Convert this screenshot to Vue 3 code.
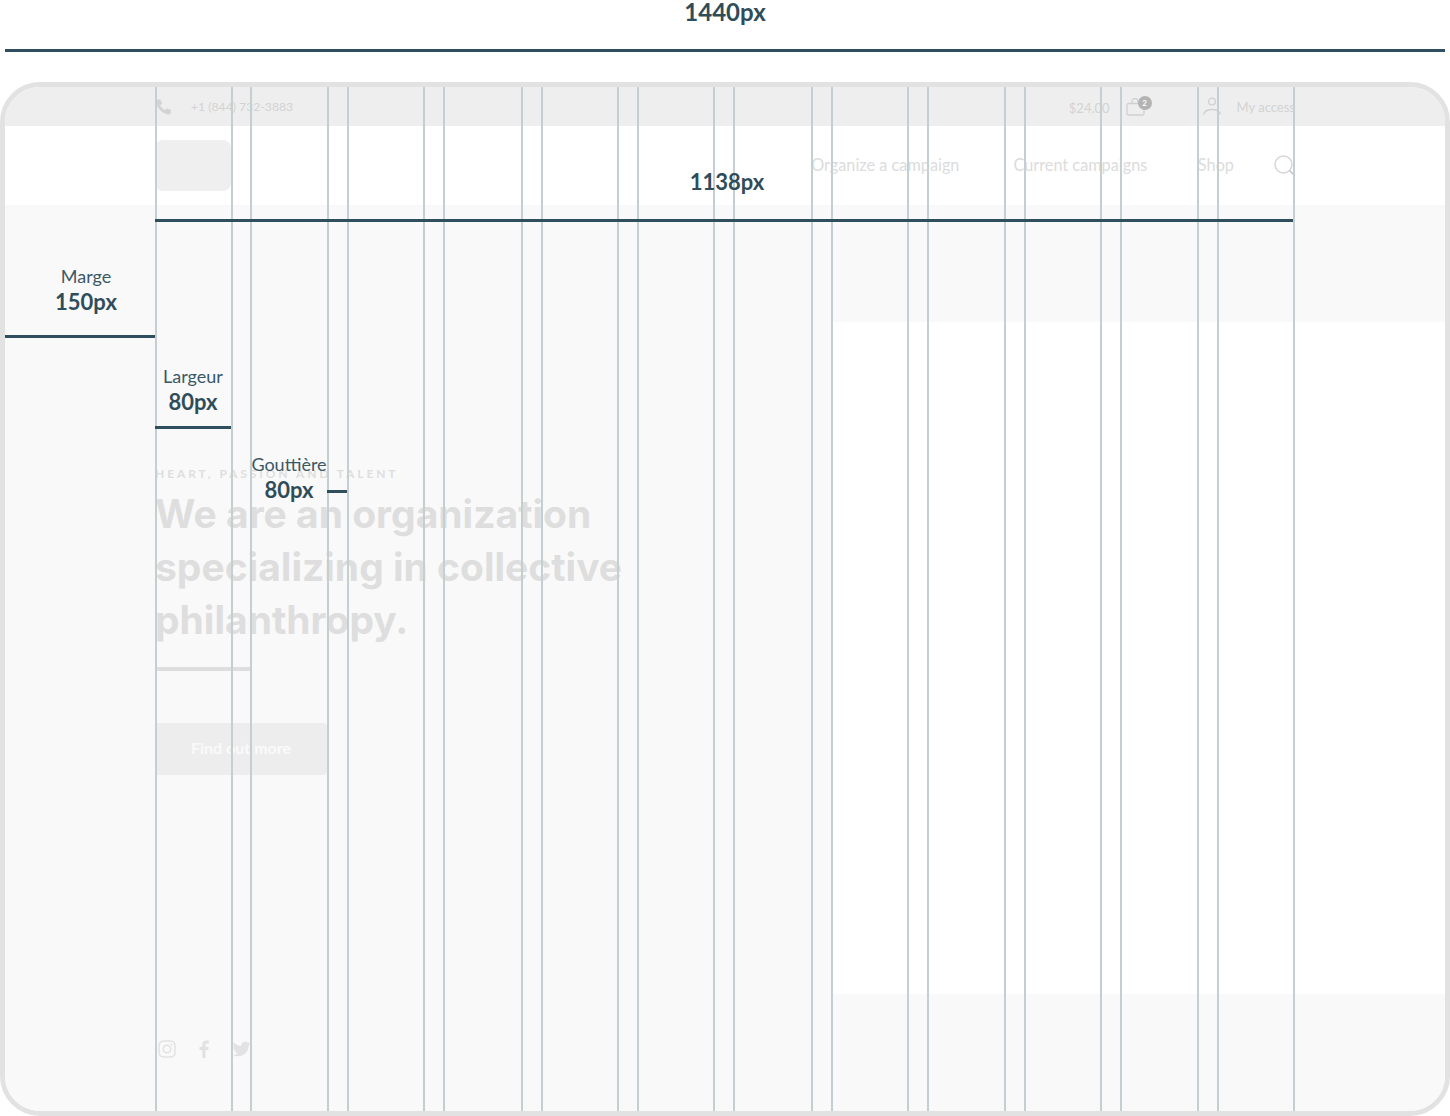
<script setup>
const gridLines = [155, 231, 250, 327, 347, 423, 443, 521, 541, 617, 637, 713, 733, 811, 831, 907, 927, 1004, 1024, 1100, 1120, 1197, 1217, 1293]
</script>

<template>
  <div class="page">
    <header class="total">
      <div class="total-label">1440px</div>
      <div class="total-rule"></div>
    </header>

    <div class="frame">
      <div class="topbar">
        <div class="top-left">
          <svg class="phone" width="20" height="20" viewBox="0 0 18 18">
            <path d="M1.500 1.200 4.200.6c.4-.1.7.1.8.4l1.200 3c.1.3 0 .6-.2.8L4.600 6c.9 1.900 2.400 3.400 4.300 4.300l1.200-1.300c.2-.2.500-.3.800-.2l3 1.200c.4.100.600.500.500.800l-.6 2.800c-.1.400-.4.600-.7.600C7.100 14.200.9 8.600.9 1.900c0-.3.200-.6.600-.7Z" fill="#d3d3d3" transform="translate(0 1.500)" />
          </svg>
          <span class="phone-no">+1 (844) 732-3883</span>
        </div>
        <div class="top-right">
          <span class="amount">$24.00</span>
          <span class="bag">
            <svg width="20" height="18" viewBox="0 0 20 18" fill="none" stroke="#d0d0d0" stroke-width="1.300">
              <rect x="1" y="5.500" width="17" height="11.500" rx="1.500" />
              <path d="M6 5.500V3.500a3 3 0 0 1 6 0v2" />
            </svg>
            <span class="badge">2</span>
          </span>
          <svg class="user" width="20" height="20" viewBox="0 1 20 20" fill="none" stroke="#d0d0d0" stroke-width="1.300">
            <circle cx="10" cy="5.500" r="3.400" />
            <path d="M1.500 18.500c1-3.500 4.500-5 8.500-5s7.500 1.500 8.500 5" />
          </svg>
          <span class="access">My access</span>
        </div>
      </div>

      <nav class="nav">
        <div class="logo"></div>
        <div class="menu">
          <a class="item">Organize a campaign</a>
          <a class="item">Current campaigns</a>
          <a class="item">Shop</a>
          <svg class="search" width="21" height="21" viewBox="0 0 21 21" fill="none" stroke="#d6d6d6" stroke-width="1.500">
            <circle cx="9.500" cy="9.500" r="8.500" />
            <path d="m15.700 15.700 4.300 4.300" stroke="#c2c2c2" />
          </svg>
        </div>
      </nav>

      <section class="hero">
        <div class="hero-left">
          <div class="eyebrow">HEART, PASSION AND TALENT</div>
          <h1 class="title">We are an organization specializing in collective philanthropy.</h1>
          <div class="divider"></div>
          <button class="cta">Find out more</button>
          <div class="socials">
            <svg width="18" height="18" viewBox="0 0 18 18" fill="none" stroke="#e2e2e2" stroke-width="1.500">
              <rect x="1" y="1" width="16" height="16" rx="4.500" />
              <circle cx="9" cy="9" r="3.800" />
              <circle cx="13.600" cy="4.400" r=".9" fill="#e2e2e2" stroke="none" />
            </svg>
            <svg width="10" height="18" viewBox="0 0 10 18">
              <path d="M6.500 18V10h2.700l.4-3.200H6.500V4.900c0-.9.300-1.500 1.600-1.500h1.700V.6C9.500.5 8.500.4 7.400.4 5 .4 3.300 1.900 3.300 4.500v2.300H.5V10h2.800v8Z" fill="#e2e2e2" />
            </svg>
            <svg width="19" height="18" viewBox="0 0 24 24">
              <path d="M23.950 4.570a10 10 0 0 1-2.820.770 4.960 4.960 0 0 0 2.160-2.720c-.95.550-2 .96-3.130 1.190a4.920 4.920 0 0 0-8.380 4.480C7.690 8.100 4.070 6.130 1.640 3.160a4.820 4.820 0 0 0-.67 2.480c0 1.710.87 3.210 2.190 4.100a4.900 4.900 0 0 1-2.230-.62v.06a4.920 4.920 0 0 0 3.950 4.830 5 5 0 0 1-2.210.08 4.940 4.940 0 0 0 4.610 3.420A9.870 9.870 0 0 1 0 19.540a14 14 0 0 0 7.560 2.210c9.050 0 14-7.500 14-13.980 0-.21 0-.42-.02-.63a9.940 9.940 0 0 0 2.410-2.570Z" fill="#e2e2e2" />
            </svg>
          </div>
        </div>
        <div class="hero-right">
          <div class="panel"></div>
        </div>
      </section>

      <div class="grid-overlay">
        <span v-for="x in gridLines" :key="x" class="grid-line" :style="{ left: x - 5 + 'px' }"></span>
      </div>

      <div class="note note-wide"><span class="note-big">1138px</span></div>
      <div class="note note-marge"><span>Marge</span><b>150px</b></div>
      <div class="note note-largeur"><span>Largeur</span><b>80px</b></div>
      <div class="note note-gutter"><span>Gouttière</span><b>80px</b></div>
      <i class="rule rule-wide"></i>
      <i class="rule rule-marge"></i>
      <i class="rule rule-largeur"></i>
      <i class="rule rule-gutter"></i>
    </div>
  </div>
</template>

<style>
html, body { margin: 0; background: #fff; }
</style>

<style scoped>
.page {
  width: 1450px;
  height: 1116px;
  overflow: hidden;
  background: #fff;
  font-family: Lato, "Open Sans", sans-serif;
}
.total { height: 82px; padding: 0 5px; box-sizing: border-box; }
.total-label {
  height: 49px;
  text-align: center;
  font-size: 24px;
  line-height: 24px;
  font-weight: 700;
  color: #2f4c5b;
}
.total-rule { height: 3px; background: #2f4f5e; }

.frame {
  position: relative;
  width: 1450px;
  height: 1034px;
  box-sizing: border-box;
  border: 5px solid #e2e2e2;
  border-radius: 40px;
  overflow: hidden;
  background: #fff;
}
.topbar {
  height: 39px;
  background: #eee;
  padding: 0 150px;
  display: flex;
  justify-content: space-between;
  align-items: center;
  font-size: 13px;
  color: #d3d3d3;
}
.top-left, .top-right { display: flex; align-items: center; }
.phone { margin-right: 16px; }
.phone-no { font-size: 12.200px; }
.amount { margin-right: 16px; position: relative; top: 1px; }
.bag { position: relative; display: block; width: 20px; height: 18px; margin-right: 56px; }
.bag svg { display: block; }
.badge {
  position: absolute;
  left: 12px;
  top: -2px;
  width: 14px;
  height: 14px;
  border-radius: 50%;
  background: #b3b3b3;
  color: #fff;
  font-size: 8px;
  line-height: 14px;
  font-weight: 700;
  text-align: center;
}
.user { margin-right: 15px; }

.nav {
  height: 79px;
  padding: 0 150px;
  display: flex;
  justify-content: space-between;
  align-items: center;
}
.logo { width: 76px; height: 51px; border-radius: 8px; background: #efefef; }
.menu { display: flex; align-items: center; font-size: 16.300px; color: #dcdcdc; line-height: 20px; }
.item { margin-right: 54px; position: relative; top: -1px; }
.item:nth-child(2) { margin-right: 50.500px; }
.item:nth-child(3) { margin-right: 40px; }
.search { display: block; }

.hero {
  display: flex;
  height: 906px;
  background: #f9f9f9;
}
.hero-left {
  width: 827px;
  box-sizing: border-box;
  padding: 261px 0 0 150px;
  display: flex;
  flex-direction: column;
  align-items: flex-start;
}
.eyebrow {
  font-size: 12px;
  line-height: 16px;
  letter-spacing: 2.900px;
  font-weight: 700;
  color: #dedede;
}
.title {
  margin: 5px 0 0;
  width: 480px;
  font-family: Inter, Lato, sans-serif;
  font-size: 39px;
  line-height: 53px;
  font-weight: 700;
  color: #dedede;
}
.divider { width: 96px; height: 4px; margin-top: 21px; background: #dedede; }
.cta {
  width: 172px;
  height: 52px;
  margin-top: 52px;
  border: 0;
  border-radius: 4px;
  background: #ededed;
  color: #fafafa;
  font: 700 16px Lato, sans-serif;
  padding: 0 0 3px;
}
.socials {
  margin-top: 265px;
  margin-left: 3px;
  display: flex;
  align-items: center;
  gap: 23px;
}
.socials svg { display: block; }
.hero-right { flex: 1; padding: 117px 0; box-sizing: border-box; }
.panel { height: 100%; background: #fff; }

.grid-overlay { position: absolute; inset: 0; pointer-events: none; }
.grid-line { position: absolute; top: 0; bottom: 0; width: 2px; background: #c4cfd1; }

.note {
  position: absolute;
  display: flex;
  flex-direction: column;
  align-items: center;
  color: #3b5866;
  font-size: 18px;
  line-height: 20px;
}
.note b { margin-top: 2px; font-size: 22px; line-height: 28px; font-weight: 700; color: #2f4c5b; }
.note-big { font-size: 22px; line-height: 28px; font-weight: 700; color: #2f4c5b; }
.note-wide { left: 652px; top: 81px; width: 140px; }
.note-marge { left: 0; top: 179px; width: 162px; }
.note-largeur { left: 150px; top: 279px; width: 76px; }
.note-gutter { left: 234px; top: 367px; width: 100px; }
.rule { position: absolute; background: #2f4f5e; height: 3px; }
.rule-wide { left: 150px; top: 132px; width: 1138px; }
.rule-marge { left: 0; top: 248px; width: 150px; }
.rule-largeur { left: 150px; top: 339px; width: 76px; }
.rule-gutter { left: 322px; top: 403px; width: 20px; }
</style>
